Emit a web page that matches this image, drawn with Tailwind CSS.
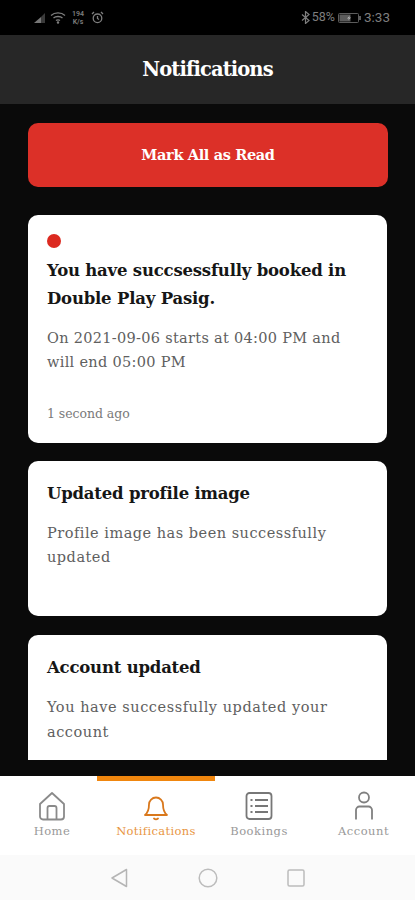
<!DOCTYPE html>
<html><head><meta charset="utf-8"><script src="https://cdn.jsdelivr.net/npm/@tailwindcss/browser@4"></script></head>
<body class="m-0 bg-[#0a0a0a]">
<div class="w-[415px] h-[900px] flex flex-col overflow-hidden bg-[#0a0a0a] font-['DejaVu_Serif',serif]">
  <div class="h-[35px] shrink-0 bg-black flex items-center justify-between pl-[34px] pr-[25px] text-[#7e7e7e] font-['Roboto',sans-serif]">
    <div class="flex items-center gap-[5px]">
      <svg width="11" height="10" viewBox="0 0 11 10"><path d="M0 10 L7 4 V10Z" fill="#777"/><path d="M7 4 L11 0 V10 H7Z" fill="#3a3a3a"/></svg>
      <svg width="16" height="13" viewBox="0 0 16 13" fill="none" stroke="#7e7e7e" stroke-width="1.300"><path d="M1 4.500c3.700-3.500 10.300-3.500 14 0M3.500 7c2.200-2 6.800-2 9 0M6 9.500c.9-.8 3.100-.8 4 0"/><circle cx="8" cy="11.500" r=".6" fill="#7e7e7e"/></svg>
      <div class="flex flex-col text-[7px] leading-[8px] font-semibold text-center w-[14px]"><span>194</span><span>K/s</span></div>
      <svg class="ml-[1px]" width="13" height="13" viewBox="0 0 13 13" fill="none" stroke="#7e7e7e" stroke-width="1.300"><circle cx="6.500" cy="7.300" r="4.300"/><path d="M6.500 5v2.500l1.500 1M1 3l2-2M12 3l-2-2"/></svg>
    </div>
    <div class="flex items-center text-[12.500px] leading-none gap-[2px]">
      <svg width="9" height="13" viewBox="0 0 9 13" fill="none" stroke="#7e7e7e" stroke-width="1.200"><path d="M1 3.500l7 6-3.500 3v-12l3.500 3-7 6"/></svg>
      <span>58%</span>
      <svg class="mx-[1px]" width="23" height="10" viewBox="0 0 23 10"><rect x=".5" y=".5" width="20" height="9" rx="1" fill="none" stroke="#5c5c5c"/><rect x="1.500" y="1.500" width="11" height="7" fill="#5c5c5c"/><path d="M12 2.500 9 5.500h2l-1 2 3-3h-2z" fill="#bbb"/><rect x="21" y="3" width="2" height="4" fill="#5c5c5c"/></svg>
      <span class="text-[13.500px]">3:33</span>
    </div>
  </div>
  <header class="h-[69px] shrink-0 bg-[#272727] flex items-center justify-center">
    <h1 class="text-white text-[19.500px] font-bold tracking-[-0.9px] leading-none pt-[1px]">Notifications</h1>
  </header>
  <main class="flex-1 min-h-0 bg-[#0a0a0a]">
    <div class="h-[656px] overflow-hidden px-[28px] pt-[19px] flex flex-col">
      <button class="h-[64px] w-[360px] shrink-0 rounded-[10px] bg-[#dc3028] text-white text-[14.500px] font-bold tracking-[-0.35px]">Mark All as Read</button>
      <section class="mt-[28px] h-[228px] shrink-0 rounded-[10px] bg-white px-[19px] pt-[19px]">
        <div class="size-[14px] rounded-full bg-[#dc2a20]"></div>
        <h2 class="mt-[9px] text-[16.500px] leading-[28px] font-semibold text-[#161616] tracking-[-0.2px]">You have succsessfully booked in Double Play Pasig.</h2>
        <p class="mt-[13px] text-[14.500px] leading-[24px] text-[#606060] tracking-[0.3px]">On 2021-09-06 starts at 04:00 PM and will end 05:00 PM</p>
        <p class="mt-[32px] text-[12.500px] leading-[16px] text-[#7a7a7a] tracking-[-0.05px]">1 second ago</p>
      </section>
      <section class="mt-[18px] h-[155px] shrink-0 rounded-[10px] bg-white px-[19px] pt-[19px]">
        <h2 class="text-[16.500px] leading-[28px] font-semibold text-[#161616] tracking-[-0.2px]">Updated profile image</h2>
        <p class="mt-[13px] text-[14.500px] leading-[24px] text-[#606060] tracking-[0.5px]">Profile image has been successfully updated</p>
      </section>
      <section class="mt-[19px] h-[200px] shrink-0 rounded-[10px] bg-white px-[19px] pt-[19px]">
        <h2 class="text-[16.500px] leading-[28px] font-semibold text-[#161616] tracking-[-0.2px]">Account updated</h2>
        <p class="mt-[13px] text-[14.500px] leading-[24.500px] text-[#606060] tracking-[0.55px]">You have successfully updated your account</p>
      </section>
    </div>
  </main>
  <nav class="h-[79px] shrink-0 bg-white grid grid-cols-[97px_118px_97px_103px] relative z-10">
    <a class="flex flex-col items-center pt-[15px] pl-[7px] text-[#999]">
      <svg width="28" height="30" viewBox="0 0 28 30" fill="none" stroke="#8a8a8a" stroke-width="1.800" stroke-linejoin="round"><path d="M2 13 14 2l12 11v12.500a3 3 0 0 1-3 3H5a3 3 0 0 1-3-3z"/><path d="M9.500 28.500V17a2 2 0 0 1 2-2h5a2 2 0 0 1 2 2v11.500"/></svg>
      <span class="text-[11.500px] leading-[14px] tracking-[0.5px] mt-[3px]">Home</span>
    </a>
    <a class="flex flex-col items-center pt-[10px] border-t-[5px] border-[#f0860e] text-[#e8963f]">
      <svg width="28" height="30" viewBox="0 0 28 30" fill="none" stroke="#d9781c" stroke-width="1.800" stroke-linejoin="round"><path d="M3 24c2.500-2 4-4.500 4-10.500a7 7 0 0 1 14 0C21 19.500 22.500 22 25 24z"/><path d="M12 27.500c1.200 1 2.800 1 4 0" stroke-linecap="round"/></svg>
      <span class="text-[11.500px] leading-[14px] tracking-[0.35px] mt-[3px]">Notifications</span>
    </a>
    <a class="flex flex-col items-center pt-[15px] pr-[9px] text-[#999]">
      <svg width="28" height="30" viewBox="0 0 28 30" fill="none" stroke="#777" stroke-width="1.800"><rect x="1.500" y="2" width="25" height="26" rx="3"/><path d="M5.500 9h2M10 9h13M5.500 15h2M10 15h13M5.500 21h2M10 21h13"/></svg>
      <span class="text-[11.500px] leading-[14px] tracking-[0.5px] mt-[3px]">Bookings</span>
    </a>
    <a class="flex flex-col items-center pt-[15px] text-[#999]">
      <svg width="28" height="30" viewBox="0 0 28 30" fill="none" stroke="#808080" stroke-width="1.800"><circle cx="14" cy="6.500" r="5"/><path d="M6 28.500V19a3.500 3.500 0 0 1 3.500-3.500h9A3.500 3.500 0 0 1 22 19v9.500"/></svg>
      <span class="text-[11.500px] leading-[14px] tracking-[0.5px] mt-[3px]">Account</span>
    </a>
  </nav>
  <div class="h-[45px] shrink-0 bg-[#fafafa] flex items-center justify-center">
    <div class="flex items-center">
      <svg width="18" height="20" viewBox="0 0 18 20" fill="none" stroke="#b5b5b5" stroke-width="1.500" stroke-linejoin="round"><path d="M16.500 1.500v17L2 10z"/></svg>
      <svg class="ml-[70px]" width="20" height="20" viewBox="0 0 20 20" fill="none" stroke="#bcbcbc" stroke-width="1.500"><circle cx="10" cy="10" r="8.800"/></svg>
      <svg class="ml-[69px] mr-[1px]" width="18" height="18" viewBox="0 0 18 18" fill="none" stroke="#bcbcbc" stroke-width="1.500"><rect x="1" y="1" width="16" height="16" rx="1.500"/></svg>
    </div>
  </div>
</div>
</body></html>
